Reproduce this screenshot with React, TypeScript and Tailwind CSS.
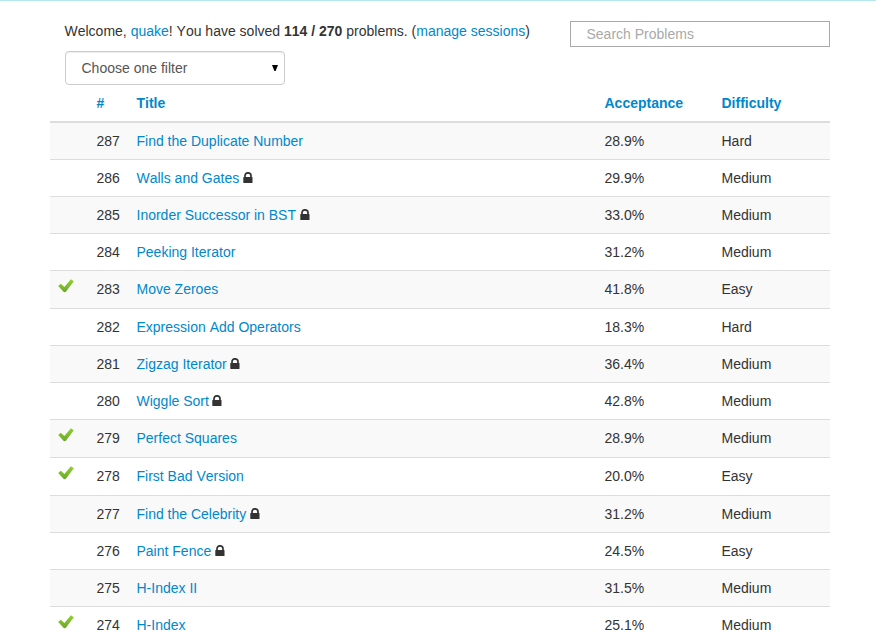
type Problem = {
  id: number;
  title: string;
  acceptance: string;
  difficulty: 'Easy' | 'Medium' | 'Hard';
  locked?: boolean;
  solved?: boolean;
};

const problems: Problem[] = [
  { id: 287, title: 'Find the Duplicate Number', acceptance: '28.9%', difficulty: 'Hard' },
  { id: 286, title: 'Walls and Gates', acceptance: '29.9%', difficulty: 'Medium', locked: true },
  { id: 285, title: 'Inorder Successor in BST', acceptance: '33.0%', difficulty: 'Medium', locked: true },
  { id: 284, title: 'Peeking Iterator', acceptance: '31.2%', difficulty: 'Medium' },
  { id: 283, title: 'Move Zeroes', acceptance: '41.8%', difficulty: 'Easy', solved: true },
  { id: 282, title: 'Expression Add Operators', acceptance: '18.3%', difficulty: 'Hard' },
  { id: 281, title: 'Zigzag Iterator', acceptance: '36.4%', difficulty: 'Medium', locked: true },
  { id: 280, title: 'Wiggle Sort', acceptance: '42.8%', difficulty: 'Medium', locked: true },
  { id: 279, title: 'Perfect Squares', acceptance: '28.9%', difficulty: 'Medium', solved: true },
  { id: 278, title: 'First Bad Version', acceptance: '20.0%', difficulty: 'Easy', solved: true },
  { id: 277, title: 'Find the Celebrity', acceptance: '31.2%', difficulty: 'Medium', locked: true },
  { id: 276, title: 'Paint Fence', acceptance: '24.5%', difficulty: 'Easy', locked: true },
  { id: 275, title: 'H-Index II', acceptance: '31.5%', difficulty: 'Medium' },
  { id: 274, title: 'H-Index', acceptance: '25.1%', difficulty: 'Medium', solved: true },
];

const columns = 'grid grid-cols-[46.5px_40px_468px_117px_1fr]';

function CheckIcon() {
  return (
    <svg className="mt-2 ml-2 block" width="16" height="16" viewBox="0 0 16 16" aria-label="solved">
      <defs>
        <linearGradient id="check-green" x1="0" y1="0" x2="0" y2="1">
          <stop offset="0" stopColor="#92d02f" />
          <stop offset="1" stopColor="#6ba82a" />
        </linearGradient>
      </defs>
      <path
        d="M0.2 7 2.8 4.7 6.4 8.1 12.9 0.3 15.8 2.3 7.7 13.1 6 13.3Z"
        fill="url(#check-green)"
      />
    </svg>
  );
}

function LockIcon() {
  return (
    <svg className="ml-[3.5px] block shrink-0" width="10" height="12" viewBox="0 0 10 12" aria-label="locked">
      <path d="M2 6V3.8a3 3 0 0 1 6 0V6" fill="none" stroke="#333" strokeWidth="1.7" />
      <rect x="0.3" y="5" width="9.2" height="6" rx="0.5" fill="#333" />
    </svg>
  );
}

function ProblemRow({ problem, striped }: { problem: Problem; striped: boolean }) {
  return (
    <div
      className={`${columns} border-t border-[#ddd] ${striped ? 'bg-[#f9f9f9]' : 'bg-white'} ${
        problem.solved ? 'h-[38px]' : 'h-[37px]'
      }`}
    >
      <div>{problem.solved && <CheckIcon />}</div>
      <div className="py-2">{problem.id}</div>
      <div className="flex h-9 items-center">
        <a className="text-[#08c]">{problem.title}</a>
        {problem.locked && <LockIcon />}
      </div>
      <div className="py-2">{problem.acceptance}</div>
      <div className="py-2">{problem.difficulty}</div>
    </div>
  );
}

export default function App() {
  return (
    <div className="h-[641px] w-[876px] overflow-hidden border-t border-[#b2e8ee] bg-white font-['Liberation_Sans',Arial,sans-serif] text-[14px] leading-5 text-[#333] [font-kerning:none]">
      <div className="ml-[50px] w-[780px]">
        <div className="flex h-[84px] justify-between">
          <div className="ml-[15px] pt-5">
            <p className="-ml-[0.5px]">
              Welcome, <a className="text-[#08c]">quake</a>! You have solved <b>114 / 270</b> problems. (
              <a className="text-[#08c]">manage sessions</a>)
            </p>
            <div className="mt-2.5 flex h-[34px] w-[220px] items-center justify-between rounded border border-[#ccc] pr-1.5 pl-[15.5px] text-[#555] shadow-[inset_0_1px_1px_rgba(0,0,0,0.075)]">
              <span>Choose one filter</span>
              <svg width="6" height="6" viewBox="0 0 6 6">
                <path d="M0 0H6L3.6 6H2.4Z" fill="#000" />
              </svg>
            </div>
          </div>
          <input
            className="mt-5 h-[26px] w-[260px] border border-[#a9a9a9] px-[15.5px] text-[14px] outline-none placeholder:text-[#a9a9a9]"
            placeholder="Search Problems"
          />
        </div>
        <div className={`${columns} h-[37px] border-b border-[#ddd] pt-2 font-bold text-[#08c]`}>
          <span />
          <span>#</span>
          <span>Title</span>
          <span>Acceptance</span>
          <span>Difficulty</span>
        </div>
        {problems.map((problem, index) => (
          <ProblemRow key={problem.id} problem={problem} striped={index % 2 === 0} />
        ))}
      </div>
    </div>
  );
}
